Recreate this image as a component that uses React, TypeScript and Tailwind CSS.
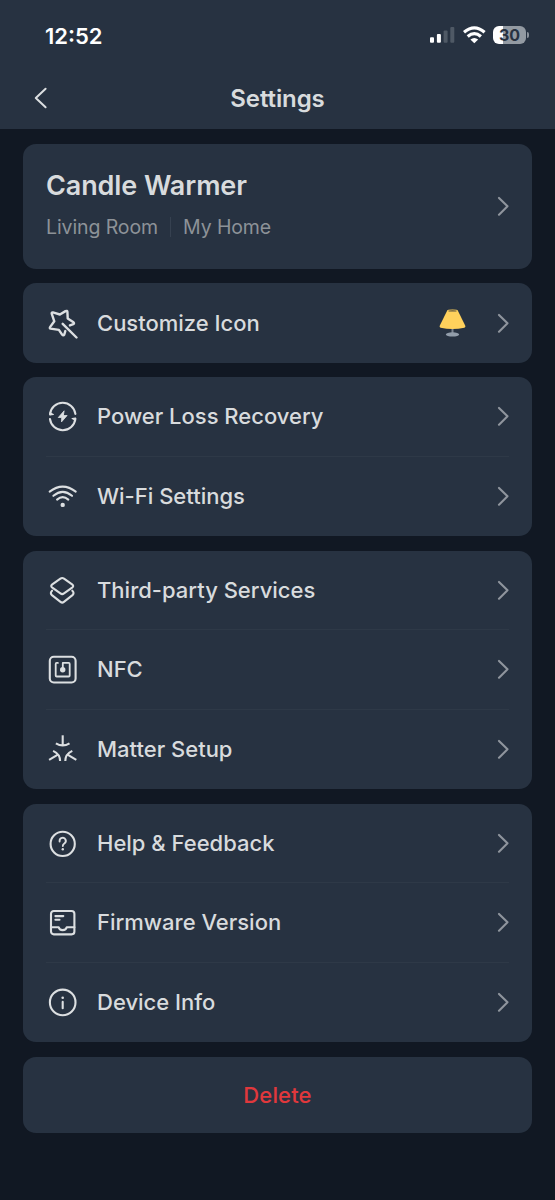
import React from 'react';

type RowProps = {
  icon: React.ReactNode;
  label: string;
  extra?: React.ReactNode;
  divider?: boolean;
};

const Icon = ({ children }: { children: React.ReactNode }) => (
  <svg
    viewBox="-0.5 -0.5 32 32"
    className="w-8 h-8 shrink-0 text-[#dcdfe1]"
    fill="none"
    stroke="currentColor"
    strokeWidth="2.1"
    strokeLinecap="round"
    strokeLinejoin="round"
  >
    {children}
  </svg>
);

const WandIcon = () => (
  <Icon>
    <g strokeWidth="2.4">
      <path d="M18.8 23.6 17.8 27Q16.8 28.6 15.6 27.1L12.4 22.4 4 21.1Q2.8 20.6 3.7 19.4L7.8 13.8 5.2 6.2Q5 4.6 6.4 4.9L13.4 7 19 3.6Q20.8 2.8 20.9 4.4L21.2 11 27 14.8Q28.1 15.9 26.8 16.6L23.4 17.9" />
      <path d="M16.2 16.3 30 30" />
    </g>
  </Icon>
);

const PowerIcon = () => (
  <Icon>
    <path d="M3.5 13.6A12.8 12.8 0 0 1 28.9 13.4" />
    <path d="M3.5 18.6A12.8 12.8 0 0 0 28.9 18.4" />
    <path d="M3.5 12.2V14.4L6.8 14Z" fill="currentColor" strokeWidth="1.2" />
    <path d="M28.9 19.8V17.6L25.6 18Z" fill="currentColor" strokeWidth="1.2" />
    <path d="M17.4 10.6 11.8 17H15.2L15 21.4 20.6 15H17.2Z" fill="currentColor" strokeWidth="0.8" />
  </Icon>
);

const WifiIcon = () => (
  <Icon>
    <path d="M3.2 11.2Q16.2 1.2 29.2 11.2" />
    <path d="M6.9 15.3Q16.2 7.3 25.5 15.3" />
    <path d="M10.6 19.1Q16.2 14.3 21.8 19.1" />
    <circle cx="16.2" cy="24.4" r="2.2" fill="currentColor" stroke="none" />
  </Icon>
);

const LayersIcon = () => (
  <Icon>
    <path d="M13.9 4.1Q15.7 2.8 17.5 4.1L25.6 9.8Q27.8 11.5 25.6 13.2L17.5 18.9Q15.7 20.2 13.9 18.9L5.8 13.2Q3.6 11.5 5.8 9.8Z" />
    <path d="M5.6 16.2Q3.2 18.6 5.4 20.6L14 27.4Q15.7 28.7 17.4 27.4L26 20.6Q28.2 18.6 25.8 16.2" />
  </Icon>
);

const NfcIcon = () => (
  <Icon>
    <rect x="3.3" y="3.2" width="25.8" height="25.8" rx="4" />
    <path d="M11.4 9.4H10.2Q9.2 9.4 9.2 10.4V22Q9.2 23 10.2 23H22.2Q23.2 23 23.2 22V10.4Q23.2 9.4 22.2 9.4H16.3V15.8" strokeWidth="1.8" />
    <circle cx="16.2" cy="16.2" r="2.7" fill="currentColor" stroke="none" />
  </Icon>
);

const MatterIcon = () => (
  <Icon>
    <g strokeLinecap="butt">
      <path d="M16.2 1.8V12" />
      <path d="M9.4 9.8Q16.2 14 23 9.8" />
      <path d="M2.6 26.3 11.8 20.8" />
      <path d="M6.6 17.4Q13.6 20.6 13.6 27.6" />
      <path d="M29.8 26.3 20.6 20.8" />
      <path d="M25.8 17.4Q18.8 20.6 18.8 27.6" />
    </g>
  </Icon>
);

const HelpIcon = () => (
  <Icon>
    <circle cx="16.2" cy="16.4" r="12.1" />
    <path d="M13.1 14V13.6A3.1 3.1 0 1 1 17.8 16Q16.3 17 16.3 18.5" strokeWidth="1.9" />
    <circle cx="16.3" cy="21.7" r="1.2" fill="currentColor" stroke="none" />
  </Icon>
);

const FirmwareIcon = () => (
  <Icon>
    <rect x="4.5" y="4.5" width="23.4" height="23.4" rx="2.8" />
    <path d="M8.9 9.6H16.8M8.9 13.3H13" />
    <path d="M4.5 20.8H12.2Q12.8 23.6 16.2 23.6T20.2 20.8H27.9" />
  </Icon>
);

const InfoIcon = () => (
  <Icon>
    <circle cx="16.2" cy="15.9" r="12.8" />
    <path d="M16.2 15.4V21.8" />
    <circle cx="16.2" cy="11.3" r="1.3" fill="currentColor" stroke="none" />
  </Icon>
);

const LampIcon = () => (
  <svg viewBox="0.5 0.5 30 32" className="w-[30px] h-8 mr-[29px]">
    <path d="M14 20h2v7h-2z" fill="#7d8590" />
    <ellipse cx="15" cy="27.9" rx="6.7" ry="2.1" fill="#929daa" />
    <path d="M9.6 4.2 2.1 19.6Q1.9 20.8 3.1 21.2Q15 23.8 26.9 21.2Q28.1 20.8 27.9 19.6L20.4 4.2Z" fill="#ffd15c" />
    <ellipse cx="15" cy="4.3" rx="5.4" ry="1.4" fill="#ffd15c" />
    <ellipse cx="15" cy="4.4" rx="4.4" ry="0.7" fill="#5b523c" />
  </svg>
);

const Chevron = () => (
  <svg viewBox="0 -0.3 12 20" className="w-3 h-5 shrink-0" fill="none" stroke="#8f959d" strokeWidth="2.1" strokeLinecap="round" strokeLinejoin="round">
    <path d="M2 1.6 10.5 10 2 18.4" />
  </svg>
);

const Card = ({ children }: { children: React.ReactNode }) => (
  <div className="bg-[#273241] rounded-[13px] px-[23px]">{children}</div>
);

const Row = ({ icon, label, extra, divider }: RowProps) => (
  <div className={divider ? 'border-b border-[#2e3947]' : ''}>
    <div className={divider ? 'flex items-center h-[78.5px]' : 'flex items-center h-[79.5px]'}>
      {icon}
      <span className="ml-[19px] pt-[0.8px] flex-1 text-[22px] font-medium text-[#d8dbdd]">{label}</span>
      {extra}
      <Chevron />
    </div>
  </div>
);

const StatusBar = () => (
  <div className="flex items-center justify-between h-[70px] pl-[45px] pr-[26px]">
    <span className="pt-[2px] text-[22px] font-semibold text-white">12:52</span>
    <div className="flex items-center">
      <svg viewBox="0 0 25 18" className="w-[25px] h-[18px] mr-[8px]" fill="#fff">
        <rect x="0" y="11.3" width="4" height="5.4" rx="1" />
        <rect x="6.9" y="8" width="4" height="8.7" rx="1" />
        <rect x="13.6" y="4.6" width="4" height="12.1" rx="1" fill="#4f5965" />
        <rect x="20.3" y="1" width="4" height="15.7" rx="1" fill="#4f5965" />
      </svg>
      <svg viewBox="0 0 23 18" className="w-[23px] h-[18px] mr-[7px]" fill="none" stroke="#fff" strokeWidth="3.2">
        <path d="M1 6.2Q11.3-2.6 21.6 6.2" />
        <path d="M4.7 10.5Q11.3 4.7 17.9 10.5" />
        <path d="M11.3 17.2 7.4 13.4Q11.3 10.4 15.2 13.4Z" fill="#fff" stroke="none" />
      </svg>
      <div className="flex items-center justify-center w-[33px] h-[18px] rounded-[6px] bg-linear-to-r from-white from-30% to-[#939aa2] to-30% text-[16px] leading-none font-bold text-[#273241]">
        30
      </div>
      <div className="ml-[1px] w-[2px] h-[6px] rounded-r-full bg-[#8b929b]"></div>
    </div>
  </div>
);

export default function App() {
  return (
    <div className="w-full h-[1200px] bg-[#111823] font-[Inter,sans-serif] overflow-hidden">
      <header className="h-[129px] bg-[#273241]">
        <StatusBar />
        <div className="grid grid-cols-3 items-center h-[56px] px-[34px]">
          <svg viewBox="0 0 14 22" className="w-[14px] h-[22px]" fill="none" stroke="#dcdfe1" strokeWidth="2" strokeLinecap="round" strokeLinejoin="round">
            <path d="M11.6 1.8 1.8 11 11.6 20.2" />
          </svg>
          <h1 className="pt-[1.5px] text-center text-[24px] tracking-[-0.1px] font-semibold text-[#d8dbdd]">Settings</h1>
        </div>
      </header>

      <main className="flex flex-col gap-[14.5px] px-[23px] pt-[14.5px]">
        <Card>
          <div className="flex items-center justify-between h-[125px]">
            <div className="flex flex-col pb-[4px]">
              <h2 className="text-[27px] leading-[34px] tracking-[-0.1px] font-semibold text-[#d8dbdd]">Candle Warmer</h2>
              <div className="flex items-center mt-[12px] text-[19.5px] leading-[24px] tracking-[-0.1px] text-[#8d9298]">
                <span>Living Room</span>
                <span className="mx-[12px] w-px h-5 bg-[#364150]"></span>
                <span>My Home</span>
              </div>
            </div>
            <Chevron />
          </div>
        </Card>

        <Card>
          <Row icon={<WandIcon />} label="Customize Icon" extra={<LampIcon />} />
        </Card>

        <Card>
          <Row icon={<PowerIcon />} label="Power Loss Recovery" divider />
          <Row icon={<WifiIcon />} label="Wi-Fi Settings" />
        </Card>

        <Card>
          <Row icon={<LayersIcon />} label="Third-party Services" divider />
          <Row icon={<NfcIcon />} label="NFC" divider />
          <Row icon={<MatterIcon />} label="Matter Setup" />
        </Card>

        <Card>
          <Row icon={<HelpIcon />} label="Help & Feedback" divider />
          <Row icon={<FirmwareIcon />} label="Firmware Version" divider />
          <Row icon={<InfoIcon />} label="Device Info" />
        </Card>

        <button className="h-[76.5px] pt-[1.5px] rounded-[13px] bg-[#273241] text-[22px] tracking-[0.15px] font-medium text-[#e0383c]">
          Delete
        </button>
      </main>
    </div>
  );
}
